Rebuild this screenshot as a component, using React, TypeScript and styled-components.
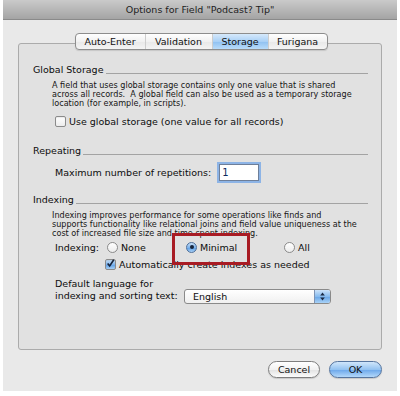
import React from 'react';
import styled, { createGlobalStyle, css } from 'styled-components';

const GlobalStyle = createGlobalStyle`
  html, body {
    margin: 0;
    padding: 0;
    background: #ffffff;
  }
  body {
    font-family: "DejaVu Sans", "Liberation Sans", sans-serif;
    color: #0d0d0d;
  }
`;

const Window = styled.div`
  margin-left: 3px;
  width: 394px;
  height: 391px;
  background: #e9e9e9;
  display: flex;
  flex-direction: column;
`;

const TitleBar = styled.div`
  height: 20px;
  flex-shrink: 0;
  box-sizing: border-box;
  background: linear-gradient(#cacaca, #a4a4a4);
  border-bottom: 1px solid #8a8a8a;
  display: flex;
  align-items: center;
  justify-content: center;
  font-size: 9.5px;
  color: #1e1e1e;
`;

const Body = styled.div`
  padding: 13px 15px 0 15px;
  display: flex;
  flex-direction: column;
`;

const TabRow = styled.div`
  display: flex;
  justify-content: center;
  margin-bottom: -7px;
  padding-left: 2px;
  position: relative;
  z-index: 1;
`;

const TabGroup = styled.div`
  display: flex;
  height: 17px;
  box-sizing: border-box;
  border: 1px solid #8d8d8d;
  border-radius: 4px;
  overflow: hidden;
  background: linear-gradient(#ffffff, #f1f1f1 50%, #e8e8e8 51%, #f4f4f4);
  box-shadow: 0 1px 1px rgba(0, 0, 0, 0.12);
`;

const Tab = styled.div<{ $w: number; $active?: boolean }>`
  width: ${(p) => p.$w}px;
  display: flex;
  align-items: center;
  justify-content: center;
  font-size: 9.5px;
  color: #111;
  & + & {
    border-left: 1px solid #cdcdcd;
  }
  ${(p) =>
    p.$active &&
    css`
      background: linear-gradient(#d6e9fb, #a9d0f6 50%, #8ec0f1 51%, #b9dcfa);
    `}
`;

const TabBox = styled.div`
  height: 307px;
  box-sizing: border-box;
  border: 1px solid #ababab;
  border-radius: 3px;
  background: #e1e1e1;
  padding: 20px 13px 0 14px;
  display: flex;
  flex-direction: column;
`;

const SectionHead = styled.div<{ $mt: number }>`
  display: flex;
  align-items: flex-end;
  height: 12px;
  margin-top: ${(p) => p.$mt}px;
  font-size: 9.5px;
  line-height: 12px;
`;

const HeadRule = styled.div`
  flex: 1;
  height: 1px;
  background: #a3a3a3;
  margin: 0 0 2px 2px;
`;

const Note = styled.div<{ $mt: number }>`
  margin: ${(p) => p.$mt}px 0 0 19px;
  font-size: 8.1px;
  line-height: 8.8px;
  color: #151515;
`;

const Row = styled.div<{ $mt: number; $ml: number }>`
  display: flex;
  align-items: center;
  margin: ${(p) => p.$mt}px 0 0 ${(p) => p.$ml}px;
  font-size: 9.5px;
  height: 13px;
`;

const Box = styled.span<{ $checked?: boolean }>`
  width: 11px;
  height: 11px;
  box-sizing: border-box;
  border: 1px solid #8b8b8b;
  border-radius: 2px;
  margin-right: 3px;
  display: inline-flex;
  align-items: center;
  justify-content: center;
  background: ${(p) =>
    p.$checked
      ? 'linear-gradient(#c9e1f8, #7fb4ec 50%, #5b9de4 51%, #a6cff6)'
      : 'linear-gradient(#ffffff, #ececec)'};
  box-shadow: inset 0 1px 1px rgba(0, 0, 0, 0.08);
`;

const Radio = styled.span<{ $on?: boolean }>`
  width: 11px;
  height: 11px;
  box-sizing: border-box;
  border: 1px solid ${(p) => (p.$on ? '#4e6f9a' : '#8b8b8b')};
  border-radius: 50%;
  margin-right: 3px;
  display: inline-flex;
  align-items: center;
  justify-content: center;
  background: ${(p) =>
    p.$on
      ? 'linear-gradient(#c9e1f8, #7fb4ec 50%, #5b9de4 51%, #a6cff6)'
      : 'linear-gradient(#ffffff, #ececec)'};
  &::after {
    content: '';
    display: ${(p) => (p.$on ? 'block' : 'none')};
    width: 4px;
    height: 4px;
    border-radius: 50%;
    background: #17243a;
  }
`;

const NumberField = styled.div`
  width: 40px;
  height: 17px;
  box-sizing: border-box;
  margin-left: 8px;
  background: #fff;
  border: 1px solid #6e7f99;
  box-shadow: 0 0 0 2px #8db4e6;
  font-size: 10px;
  line-height: 15px;
  padding-left: 2px;
  color: #0c2a60;
`;

const OptionGrid = styled.div`
  display: grid;
  grid-template-columns: 52px 79px 98px auto;
  align-items: center;
  height: 13px;
  margin: 3px 0 0 22px;
  font-size: 9.5px;
`;

const Option = styled.div`
  position: relative;
  display: flex;
  align-items: center;
`;

const Highlight = styled.div`
  position: absolute;
  left: -14px;
  top: -9px;
  width: 78px;
  height: 32px;
  box-sizing: border-box;
  border: 3px solid #a81c24;
  pointer-events: none;
`;

const LangRow = styled.div`
  display: flex;
  align-items: flex-end;
  margin: 7px 0 0 22px;
`;

const LangLabel = styled.div`
  width: 129px;
  font-size: 9.5px;
  line-height: 12.5px;
`;

const Popup = styled.div`
  width: 147px;
  height: 15px;
  box-sizing: border-box;
  margin-bottom: -1px;
  border: 1px solid #8a8a8a;
  border-radius: 3px;
  background: linear-gradient(#ffffff, #f0f0f0);
  display: flex;
  overflow: hidden;
  font-size: 9.5px;
`;

const PopupText = styled.div`
  flex: 1;
  padding-left: 8px;
  line-height: 13px;
`;

const PopupArrows = styled.div`
  width: 15px;
  border-left: 1px solid #7d93b4;
  background: linear-gradient(#cde3f9, #86bbef 50%, #66a4e6 51%, #a9d2f7);
  display: flex;
  align-items: center;
  justify-content: center;
`;

const ButtonRow = styled.div`
  display: flex;
  justify-content: flex-end;
  gap: 9px;
  margin-top: 11px;
`;

const Button = styled.div<{ $w: number; $primary?: boolean }>`
  width: ${(p) => p.$w}px;
  height: 17px;
  box-sizing: border-box;
  border-radius: 9px;
  border: 1px solid ${(p) => (p.$primary ? '#56759f' : '#7e7e7e')};
  display: flex;
  align-items: center;
  justify-content: center;
  font-size: 9.5px;
  color: #111;
  background: ${(p) =>
    p.$primary
      ? 'linear-gradient(#d0e6fb, #94c3f1 50%, #6aa6ea 51%, #b3d8fa)'
      : 'linear-gradient(#ffffff, #f2f2f2 50%, #e2e2e2 51%, #fbfbfb)'};
  box-shadow: 0 1px 1px rgba(0, 0, 0, 0.15);
`;

const Check = () => (
  <svg width="11" height="11" viewBox="0 0 11 11" style={{ marginTop: -2 }}>
    <path d="M2 5.5 L4.5 8.5 L9.5 1" fill="none" stroke="#16233a" strokeWidth="2" />
  </svg>
);

const UpDown = () => (
  <svg width="5" height="9" viewBox="0 0 5 9">
    <path d="M2.5 0.5 L4.8 3.5 L0.2 3.5 Z" fill="#1b2a44" />
    <path d="M2.5 8.5 L4.8 5.5 L0.2 5.5 Z" fill="#1b2a44" />
  </svg>
);

const tabs = [
  { label: 'Auto-Enter', w: 69 },
  { label: 'Validation', w: 66 },
  { label: 'Storage', w: 55, active: true },
  { label: 'Furigana', w: 58 },
];

const App = () => {
  return (
    <>
      <GlobalStyle />
      <Window>
        <TitleBar>Options for Field "Podcast? Tip"</TitleBar>
        <Body>
          <TabRow>
            <TabGroup>
              {tabs.map((t) => (
                <Tab key={t.label} $w={t.w} $active={t.active}>
                  {t.label}
                </Tab>
              ))}
            </TabGroup>
          </TabRow>
          <TabBox>
            <SectionHead $mt={0}>
              Global Storage
              <HeadRule />
            </SectionHead>
            <Note $mt={5}>
              A field that uses global storage contains only one value that is shared
              <br />
              across all records.&nbsp; A global field can also be used as a temporary storage
              <br />
              location (for example, in scripts).
            </Note>
            <Row $mt={8} $ml={22}>
              <Box />
              Use global storage (one value for all records)
            </Row>

            <SectionHead $mt={17}>
              Repeating
              <HeadRule />
            </SectionHead>
            <Row $mt={7} $ml={22} style={{ height: 17 }}>
              Maximum number of repetitions:
              <NumberField>1</NumberField>
            </Row>

            <SectionHead $mt={13}>
              Indexing
              <HeadRule />
            </SectionHead>
            <Note $mt={5}>
              Indexing improves performance for some operations like finds and
              <br />
              supports functionality like relational joins and field value uniqueness at the
              <br />
              cost of increased file size and time spent indexing.
            </Note>
            <OptionGrid>
              <span>Indexing:</span>
              <Option>
                <Radio />
                None
              </Option>
              <Option>
                <Radio $on />
                Minimal
                <Highlight />
              </Option>
              <Option>
                <Radio />
                All
              </Option>
            </OptionGrid>
            <Row $mt={4} $ml={72}>
              <Box $checked>
                <Check />
              </Box>
              Automatically create indexes as needed
            </Row>

            <LangRow>
              <LangLabel>
                Default language for
                <br />
                indexing and sorting text:
              </LangLabel>
              <Popup>
                <PopupText>English</PopupText>
                <PopupArrows>
                  <UpDown />
                </PopupArrows>
              </Popup>
            </LangRow>
          </TabBox>
          <ButtonRow>
            <Button $w={52}>Cancel</Button>
            <Button $w={53} $primary>
              OK
            </Button>
          </ButtonRow>
        </Body>
      </Window>
    </>
  );
};

export default App;
